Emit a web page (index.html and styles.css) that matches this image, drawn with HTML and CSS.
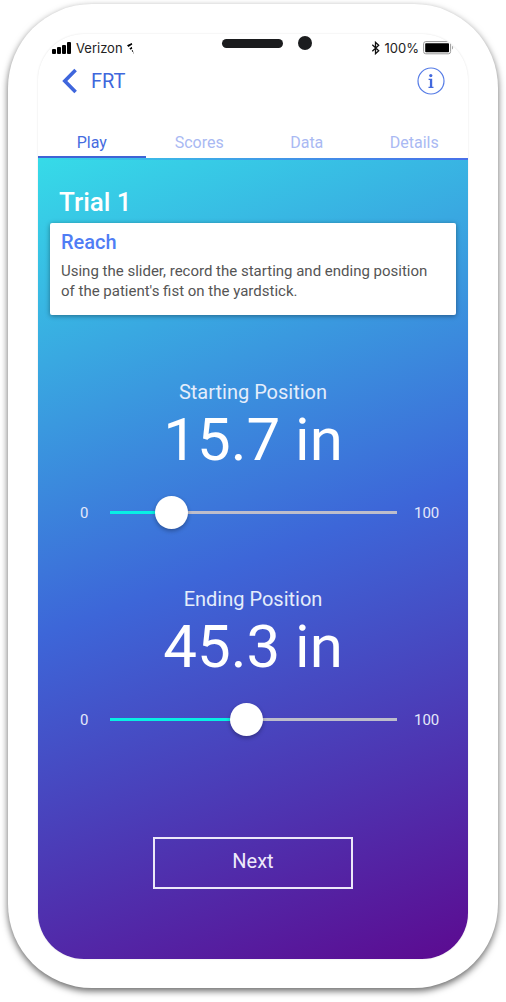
FILE: index.html
```html
<!DOCTYPE html>
<html lang="en">
<head>
<meta charset="utf-8">
<meta name="viewport" content="width=device-width, initial-scale=1">
<title>FRT</title>
<link rel="stylesheet" href="styles.css">
</head>
<body>
<div class="phone">
  <div class="screen">
    <div class="status">
      <div class="status-side status-left">
        <svg width="20" height="12" viewBox="0 0 20 12" aria-hidden="true"><rect x="0" y="7" width="4" height="5" rx="1"/><rect x="5" y="5" width="4" height="7" rx="1"/><rect x="10" y="3" width="4" height="9" rx="1"/><rect x="15" y="0" width="4" height="12" rx="1"/></svg>
        <span>Verizon</span>
        <svg width="8" height="12" viewBox="0 0 8 12" aria-hidden="true"><path d="M0 3.2 4.8 1l.5 1.4L1.4 4.9zM2.4 6.4l2.4-1.6.5 1.7-1.6 1.2zM4.6 8.7l1-.8.7 1.6-.7.4zM6 10.6l1 .2v1z"/></svg>
      </div>
      <div class="notch"><span class="speaker"></span><span class="camera"></span></div>
      <div class="status-side status-right">
        <svg width="10" height="14" viewBox="0 0 10 14" fill="none" stroke="#111" stroke-width="1.3" aria-hidden="true"><path d="m1.3 3.8 6.4 6-3.2 2.9V1.3l3.2 2.9-6.4 6"/></svg>
        <span>100%</span>
        <svg width="31" height="14" viewBox="0 0 31 14" aria-hidden="true"><rect x=".6" y=".6" width="27" height="12.2" rx="2.2" fill="none" stroke="#999"/><rect x="2.2" y="2.2" width="23.8" height="9" rx=".8"/><path d="M29 4.8c1.6.8 1.6 3 0 3.8z" fill="#aaa"/></svg>
      </div>
    </div>
    <header class="bar">
      <button class="back" type="button">
        <svg width="16" height="26" viewBox="0 0 16 26" fill="none" stroke="#3f66dc" stroke-width="3.6" aria-hidden="true"><path d="M13.6 2 2.8 13l10.8 11"/></svg>
        <span>FRT</span>
      </button>
      <button class="info" type="button" aria-label="Information">
        <svg width="28" height="28" viewBox="0 0 28 28" aria-hidden="true"><circle cx="14" cy="14" r="13" fill="none" stroke="#567ce6" stroke-width="1.2"/><circle cx="13.8" cy="8.6" r="1.6" fill="#4369dd"/><path d="M11.6 11.8h3.6v8h1.3v1.1h-5v-1.1h1.4v-6.9h-1.3z" fill="#4369dd"/></svg>
      </button>
    </header>
    <nav class="tabs">
      <a class="tab active" href="#play" aria-current="page">Play</a>
      <a class="tab" href="#scores">Scores</a>
      <a class="tab" href="#data">Data</a>
      <a class="tab" href="#details">Details</a>
    </nav>
    <main class="content">
      <h1 class="title">Trial 1</h1>
      <section class="card">
        <h2 class="card-title">Reach</h2>
        <p class="card-text">Using the slider, record the starting and ending position of the patient's fist on the yardstick.</p>
      </section>
      <section class="measure">
        <label class="label" for="start">Starting Position</label>
        <output class="value" for="start">15.7 in</output>
        <div class="slider">
          <span class="bound">0</span>
          <input class="range" id="start" type="range" min="0" max="100" step="0.1" value="15.7" style="--fill: 20%">
          <span class="bound">100</span>
        </div>
      </section>
      <section class="measure">
        <label class="label" for="end">Ending Position</label>
        <output class="value" for="end">45.3 in</output>
        <div class="slider">
          <span class="bound">0</span>
          <input class="range" id="end" type="range" min="0" max="100" step="0.1" value="45.3" style="--fill: 47%">
          <span class="bound">100</span>
        </div>
      </section>
      <button class="next" type="button">Next</button>
    </main>
  </div>
</div>
</body>
</html>
```
FILE: styles.css
```css
* {
  box-sizing: border-box;
}

body {
  margin: 0;
  padding: 4px 8px 14px;
  background: #fff;
  font-family: Roboto, "Liberation Sans", sans-serif;
}

.phone {
  padding: 30px 30px 29px;
  border-radius: 84px;
  background: #fff;
  box-shadow: 0 3px 7px rgba(0, 0, 0, 0.6);
}

.screen {
  overflow: hidden;
  border-radius: 46px;
  background: #fff;
  box-shadow: 0 0 2px rgba(0, 0, 0, 0.12);
}

.status {
  display: flex;
  align-items: flex-start;
  justify-content: space-between;
  height: 28px;
  padding: 0 14px;
  font: 13px/16px Inter, sans-serif;
  color: #222;
}

.status-side {
  display: flex;
  flex: 1;
  align-items: center;
  gap: 4px;
  padding-top: 6px;
}

.status-right {
  justify-content: flex-end;
}

.notch {
  display: flex;
  align-items: center;
  gap: 15px;
  padding: 2px 0 0 28px;
}

.speaker {
  width: 61px;
  height: 9px;
  border-radius: 5px;
  background: #1b1c1e;
}

.camera {
  width: 14px;
  height: 14px;
  border-radius: 50%;
  background: #1b1c1e;
}

.bar {
  display: flex;
  align-items: center;
  justify-content: space-between;
  height: 38px;
  padding: 0 23px 0 24px;
}

.back,
.info {
  display: flex;
  align-items: center;
  gap: 13px;
  padding: 0;
  border: 0;
  background: none;
  color: #4067dc;
  font: 20px/24px Roboto, sans-serif;
}

.tabs {
  display: grid;
  grid-template-columns: repeat(4, 1fr);
  height: 58px;
}

.tab {
  padding-top: 33px;
  border-bottom: 2px solid transparent;
  color: #a9b9f3;
  font-size: 16px;
  line-height: 20px;
  text-align: center;
  text-decoration: none;
}

.active {
  border-color: #3f63d5;
  color: #466cdf;
}

.content {
  display: flex;
  flex-direction: column;
  padding: 30px 12px 70px;
  background:
    linear-gradient(90deg, rgba(75, 95, 235, 0), rgba(75, 95, 235, 0.8)) top / 100% 2px no-repeat,
    linear-gradient(160deg, #36dbe8 0%, #3d66d8 50%, #5c0a90 100%);
  color: #fff;
}

.title {
  margin: 0 9px 7px;
  font-size: 26px;
  font-weight: 500;
  line-height: 28px;
}

.card {
  padding: 8px 20px 14px 11px;
  border-radius: 2px;
  background: #fff;
  box-shadow: 0 1px 5px rgba(0, 0, 0, 0.4);
}

.card-title {
  margin: 0 0 8px;
  color: #4f7df5;
  font-size: 20px;
  font-weight: 500;
  line-height: 22px;
}

.card-text {
  margin: 0;
  color: #555;
  font-size: 15px;
  line-height: 20px;
}

.measure {
  display: flex;
  flex-direction: column;
  align-items: center;
  margin-bottom: 58px;
}

.card + .measure {
  margin-top: 65px;
}

.label {
  color: #e4edfb;
  font-size: 20px;
  line-height: 24px;
}

.value {
  font-size: 60px;
  line-height: 72px;
}

.slider {
  display: grid;
  grid-template-columns: 25px 1fr 25px;
  align-items: center;
  gap: 17px;
  width: 100%;
  margin-top: 20px;
  padding: 0 17px 0 18px;
}

.bound {
  color: #e4e8fa;
  font-size: 15px;
  line-height: 20px;
  text-align: right;
}

.bound:first-child {
  text-align: left;
  padding-left: 12px;
}

.range {
  appearance: none;
  width: calc(100% + 5px);
  height: 33px;
  margin: 0;
  padding: 0 0 0 5px;
  background: linear-gradient(90deg, #08efe4 var(--fill), #bdbdcb var(--fill)) left center / calc(100% - 5px) 3px no-repeat;
}

.range::-webkit-slider-thumb {
  appearance: none;
  width: 33px;
  height: 33px;
  border: 0;
  border-radius: 50%;
  background: #fff;
  box-shadow: 0 2px 4px rgba(0, 0, 0, 0.3);
}

.range::-moz-range-thumb {
  width: 33px;
  height: 33px;
  border: 0;
  border-radius: 50%;
  background: #fff;
}

.next {
  align-self: center;
  width: 200px;
  height: 52px;
  margin-top: 43px;
  padding: 0 0 4px;
  border: 2px solid #ece8f8;
  background: none;
  color: #eeeafa;
  font: 20px/24px Roboto, sans-serif;
}
```
